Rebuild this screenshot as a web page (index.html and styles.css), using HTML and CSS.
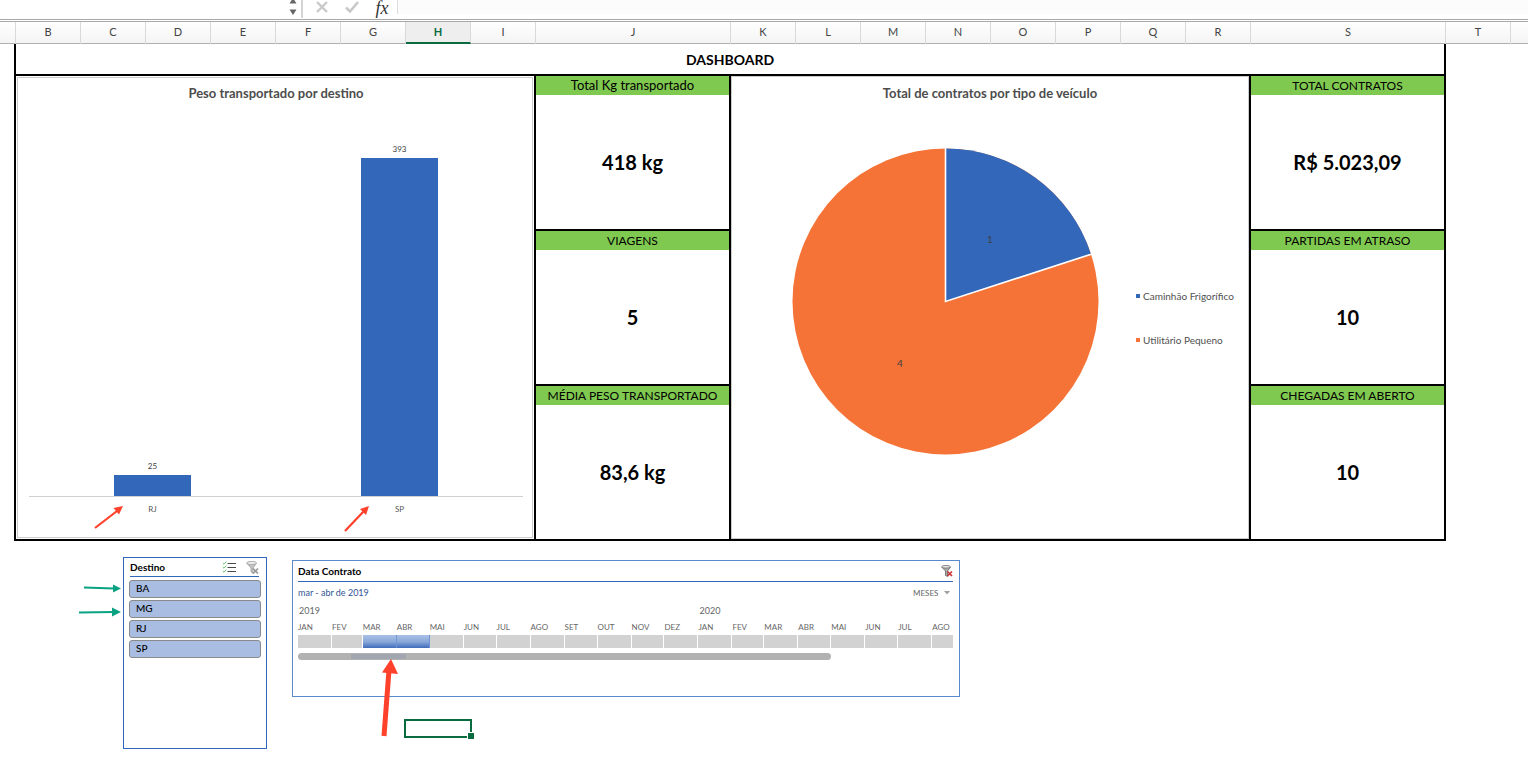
FILE: index.html
```html
<!DOCTYPE html>
<html lang="pt-BR">
<head>
<meta charset="utf-8">
<title>Dashboard</title>
<link rel="stylesheet" href="styles.css">
</head>
<body>
<div class="formula-bar">
  <div class="name-box">
    <input class="name-input" type="text" aria-label="Caixa de nome">
    <svg class="stepper" width="8" height="15" viewBox="0 0 8 15" aria-hidden="true"><path d="M.5 3.500h7L4 -2zM.5 9.500h7L4 15z" fill="#666"/></svg>
  </div>
  <button class="fx-button" type="button" aria-label="Cancelar"><svg width="12" height="12" viewBox="0 0 12 12"><path d="M1 1l10 10M11 1L1 11" stroke="#c9c9c9" stroke-width="2.4" fill="none"/></svg></button>
  <button class="fx-button" type="button" aria-label="Inserir"><svg width="14" height="12" viewBox="0 0 14 12"><path d="M1 6.500l4 4L13 1" stroke="#c9c9c9" stroke-width="2.600" fill="none"/></svg></button>
  <button class="fx-button fx-label" type="button">fx</button>
  <input class="formula-input" type="text" aria-label="Barra de fórmulas">
</div>

<div class="columns">
  <span></span><span>B</span><span>C</span><span>D</span><span>E</span><span>F</span><span>G</span><span class="active">H</span><span>I</span><span>J</span><span>K</span><span>L</span><span>M</span><span>N</span><span>O</span><span>P</span><span>Q</span><span>R</span><span>S</span><span>T</span><span></span>
</div>

<main class="sheet">
  <section class="dashboard">
    <h1 class="dashboard-title">DASHBOARD</h1>
    <div class="panels">
      <section class="chart bar-chart">
        <h2 class="chart-title">Peso transportado por destino</h2>
        <div class="plot">
          <div class="category"><span class="value">25</span><div class="bar" style="height:21px"></div></div>
          <div class="category"><span class="value">393</span><div class="bar" style="height:338px"></div></div>
        </div>
        <div class="axis">
          <span class="tick">RJ
            <svg class="arrow arrow-bar" width="32" height="26" viewBox="0 0 32 26" aria-hidden="true"><path d="M2 24L24 7" stroke="#ff412c" stroke-width="2.200" fill="none"/><path d="M30 2L20.500 4L26 10.500z" fill="#ff412c"/></svg>
          </span>
          <span class="tick">SP
            <svg class="arrow arrow-bar" width="32" height="28" viewBox="0 0 32 28" aria-hidden="true"><path d="M5 27L24 7" stroke="#ff412c" stroke-width="2.200" fill="none"/><path d="M29 2L20 5L26 11z" fill="#ff412c"/></svg>
          </span>
        </div>
      </section>

      <div class="kpis">
        <section class="kpi"><h2 class="kpi-name mixed-case">Total Kg transportado</h2><p class="kpi-value">418 kg</p></section>
        <section class="kpi"><h2 class="kpi-name">VIAGENS</h2><p class="kpi-value">5</p></section>
        <section class="kpi"><h2 class="kpi-name">MÉDIA PESO TRANSPORTADO</h2><p class="kpi-value">83,6 kg</p></section>
      </div>

      <section class="chart pie-chart">
        <h2 class="chart-title">Total de contratos por tipo de veículo</h2>
        <div class="pie-body">
          <svg class="pie" width="307" height="307" viewBox="0 0 307 307" role="img" aria-label="Contratos por tipo de veículo">
            <circle cx="153.500" cy="153.500" r="153" fill="#f57336"/>
            <path d="M153.500 153.500V.5A153 153 0 0 1 299 106.200z" fill="#3267b9"/>
            <path d="M153.500 0V153.500L300 105.900" fill="none" stroke="#fff" stroke-width="1.600"/>
            <text x="198" y="95" text-anchor="middle" class="pie-label">1</text>
            <text x="108" y="219" text-anchor="middle" class="pie-label">4</text>
          </svg>
          <ul class="legend">
            <li class="truck">Caminhão Frigorífico</li>
            <li class="utility">Utilitário Pequeno</li>
          </ul>
        </div>
      </section>

      <div class="kpis">
        <section class="kpi"><h2 class="kpi-name">TOTAL CONTRATOS</h2><p class="kpi-value">R$ 5.023,09</p></section>
        <section class="kpi"><h2 class="kpi-name">PARTIDAS EM ATRASO</h2><p class="kpi-value">10</p></section>
        <section class="kpi"><h2 class="kpi-name">CHEGADAS EM ABERTO</h2><p class="kpi-value">10</p></section>
      </div>
    </div>
  </section>

  <div class="filters">
    <section class="slicer">
      <header class="slicer-head">
        <h2 class="filter-title">Destino</h2>
        <button class="icon-button" type="button" aria-label="Seleção múltipla"><svg width="14" height="13" viewBox="0 0 14 13"><path d="M5.500 2.500H14M5.500 6.500H14M5.500 10.500H14" stroke="#4a4a4a" stroke-width="1.200"/><path d="M.8 2l1.200 1.200L4.300.6M.8 6l1.200 1.200L4.300 4.600M.8 10l1.200 1.200L4.300 8.600" stroke="#6dc06d" fill="none"/></svg></button>
        <button class="icon-button" type="button" aria-label="Limpar filtro"><svg width="13" height="13" viewBox="0 0 13 13"><path d="M.7 2.200L5 7v4l2 1.200V7l3.500-4.800z" fill="#c4c4c4" stroke="#a2a2a2" stroke-width=".8"/><ellipse cx="5.600" cy="2" rx="4.900" ry="1.500" fill="#f1f1f1" stroke="#a0a0a0" stroke-width=".9"/><path d="M7 7.500l5 5M12 7.500l-5 5" stroke="#999" stroke-width="1.700"/></svg></button>
      </header>
      <div class="slicer-items">
        <button class="slicer-item" type="button">BA</button>
        <button class="slicer-item" type="button">MG</button>
        <button class="slicer-item" type="button">RJ</button>
        <button class="slicer-item" type="button">SP</button>
      </div>
      <svg class="arrow arrow-green" width="46" height="36" viewBox="0 0 46 36" aria-hidden="true"><path d="M6 7.500L36 8.500M1 32.500L36 32" stroke="#0aa283" stroke-width="2" fill="none"/><path d="M43 8.500L35 4.500V12.500zM43 32L34 27.500V36.500z" fill="#0aa283"/></svg>
    </section>

    <section class="timeline">
      <header class="timeline-head">
        <h2 class="filter-title">Data Contrato</h2>
        <button class="icon-button" type="button" aria-label="Limpar filtro"><svg width="12" height="12" viewBox="0 0 12 12"><path d="M.7 2L4.500 6v4.500l2 1V6L9.500 2z" fill="#aaa" stroke="#666" stroke-width=".8"/><ellipse cx="5" cy="1.800" rx="4.300" ry="1.300" fill="#eee" stroke="#777" stroke-width=".9"/><path d="M6.500 6.500l4.500 4.500M11 6.500L6.500 11" stroke="#cc3535" stroke-width="1.700"/></svg></button>
      </header>
      <div class="timeline-range">
        <span>mar - abr de 2019</span>
        <label class="period"><select class="period-select" aria-label="Nível de tempo"><option>MESES</option></select><svg width="6" height="4" viewBox="0 0 6 4" aria-hidden="true"><path d="M0 0h6L3 3.500z" fill="#a0a0a0"/></svg></label>
      </div>
      <div class="years"><span>2019</span><span>2020</span></div>
      <div class="months">
        <button type="button">JAN</button><button type="button">FEV</button><button type="button" class="on">MAR</button><button type="button" class="on">ABR</button><button type="button">MAI</button><button type="button">JUN</button><button type="button">JUL</button><button type="button">AGO</button><button type="button">SET</button><button type="button">OUT</button><button type="button">NOV</button><button type="button">DEZ</button><button type="button">JAN</button><button type="button">FEV</button><button type="button">MAR</button><button type="button">ABR</button><button type="button">MAI</button><button type="button">JUN</button><button type="button">JUL</button><button type="button">AGO</button>
      </div>
      <div class="scrollbar"><div class="scroll-mark"></div></div>
      <svg class="arrow arrow-red" width="18" height="80" viewBox="0 0 18 80" aria-hidden="true"><path d="M3 78L8 12" stroke="#ff412c" stroke-width="5" fill="none"/><path d="M10 1L1 14.500L17 16z" fill="#ff412c"/></svg>
    </section>
  </div>
  <div class="cell-cursor"></div>
</main>
</body>
</html>
```

FILE: styles.css
```css
* { box-sizing: border-box; }

body {
  margin: 0;
  background: #fff;
  color: #000;
  font-family: Lato, "Open Sans", sans-serif;
  font-size: 12px;
}

h1, h2, p, ul { margin: 0; padding: 0; }

button, input, select {
  margin: 0;
  padding: 0;
  border: 0;
  background: none;
  color: inherit;
  font: inherit;
}

/* formula bar */
.formula-bar {
  display: flex;
  height: 22px;
  border-bottom: 1px solid #a8a8a8;
  box-shadow: inset 0 -1px #fff, inset 0 -2px #a8a8a8;
}

.name-box {
  display: flex;
  width: 303px;
  height: 18px;
  padding-right: 6px;
  border-right: 2px solid #d4d4d4;
}

.name-input { flex: 1; min-width: 0; }

.stepper { margin-right: -2px; }

.fx-button {
  display: flex;
  width: 30px;
  height: 13px;
  margin-left: 4px;
  align-items: center;
  justify-content: center;
}

.fx-button + .fx-button { margin-left: 0; }

.fx-label {
  height: 16px;
  font: italic 18px/16px "Liberation Serif", serif;
  color: #333;
}

.formula-input {
  flex: 1;
  height: 14px;
  border-left: 1px solid #ddd;
  background: #fcfcfc;
}

/* column headings */
.columns {
  display: grid;
  grid-template-columns: 16px repeat(8, minmax(0, 65fr)) minmax(0, 195fr) repeat(8, minmax(0, 65fr)) minmax(0, 195fr) 65px 17px;
  height: 22px;
  background: linear-gradient(#fff, #f4f4f4);
  border-bottom: 1px solid #b0b0b0;
  color: #444;
  font-size: 11px;
  line-height: 20px;
  text-align: center;
}

.columns span { border-right: 1px solid #d9d9d9; }
.columns span:last-child { border-right: 0; }

.columns .active {
  height: 22px;
  border-bottom: 2px solid #0a6b41;
  background: #eee;
  color: #0a6b41;
  font-weight: 700;
}

.sheet { position: relative; }

/* dashboard */
.dashboard {
  margin: 0 82px 0 14px;
  border: solid #000;
  border-width: 0 2px 2px;
}

.dashboard-title {
  padding: 6px 0 4px;
  border-bottom: 2px solid #000;
  font-size: 14px;
  line-height: 20px;
  text-align: center;
}

.panels {
  display: grid;
  grid-template-columns: minmax(0, 518fr) minmax(0, 193fr) minmax(0, 518fr) minmax(0, 193fr);
  gap: 2px;
  background: #000;
}

.kpis {
  display: grid;
  grid-template-rows: repeat(3, 153px);
  gap: 2px;
}

.kpi {
  display: flex;
  flex-direction: column;
  background: #fff;
  text-align: center;
}

.kpi-name {
  background: #80c951;
  font-size: 12px;
  font-weight: 400;
  line-height: 19px;
  white-space: nowrap;
}

.mixed-case { font-size: 13px; }

.kpi-value {
  margin: auto 0;
  font-size: 20px;
  font-weight: 700;
  line-height: 24px;
}

.chart { background: #fff; }

.chart-title {
  color: #4d4d4d;
  font-size: 13px;
  line-height: 16px;
  text-align: center;
}

.bar-chart {
  padding: 8px 10px 0 12px;
  border: 1px solid #fff;
  outline: 1px solid #ccc;
  outline-offset: -2px;
}

.plot {
  display: flex;
  height: 396px;
  border-bottom: 1px solid #d0d0d0;
}

.category {
  display: flex;
  flex: 1;
  flex-direction: column;
  align-items: center;
  justify-content: flex-end;
}

.value {
  margin-bottom: 4px;
  color: #404040;
  font-size: 8px;
  line-height: 10px;
}

.bar { width: 31%; background: #3267b9; }

.axis { display: flex; }

.tick {
  position: relative;
  flex: 1;
  padding-top: 7px;
  color: #595959;
  font-size: 8px;
  line-height: 10px;
  text-align: center;
}

.arrow { position: absolute; overflow: visible; }

.arrow-bar {
  top: 7px;
  right: calc(50% + 28px);
}

/* pie */
.pie-chart {
  padding-top: 8px;
  border: 1px solid #ccc;
}

.pie-body {
  display: flex;
  padding: 47px 12px 0 60px;
  gap: 37px;
}

.pie { flex: 0 1 auto; min-width: 0; }

.pie-label { fill: #404040; font-size: 10px; }

.legend {
  display: grid;
  align-content: start;
  gap: 30px;
  padding-top: 141px;
  list-style: none;
}

.legend li {
  display: flex;
  align-items: center;
  gap: 3px;
  color: #505050;
  font-size: 10px;
  line-height: 14px;
  white-space: nowrap;
}

.legend li::before {
  width: 4px;
  height: 4px;
  background: #3267b9;
  content: "";
}

.legend .utility::before { background: #f57336; }

/* filters */
.filters {
  display: flex;
  align-items: flex-start;
  gap: 25px;
  padding: 16px 20px 15px 123px;
}

.filter-title { flex: 1; font-size: 10px; line-height: 14px; }

.icon-button { display: flex; }

.slicer {
  position: relative;
  flex: 0 0 144px;
  min-height: 192px;
  padding: 2px 5px;
  border: 1px solid #3267b9;
}

.slicer-head {
  display: flex;
  align-items: center;
  gap: 10px;
  margin: 0 2px 3px 1px;
  padding-bottom: 2px;
  border-bottom: 1px solid #3267b9;
}

.slicer-items { display: grid; gap: 2px; }

.slicer-item {
  height: 18px;
  padding: 0 0 2px 6px;
  border: 1px solid #8a8a8a;
  border-radius: 3px;
  background: #a8bde1;
  font-size: 10px;
  font-weight: 500;
  text-align: left;
}

.arrow-green { top: 22px; right: 142px; }

.timeline {
  position: relative;
  flex: 0 1 668px;
  min-width: 0;
  min-height: 137px;
  margin-top: 3px;
  padding: 3px 6px 0 5px;
  border: 1px solid #5b89c9;
}

.timeline-head {
  display: flex;
  align-items: center;
  padding-bottom: 3px;
  border-bottom: 1px solid #3267b9;
}

.timeline-range {
  display: flex;
  align-items: center;
  justify-content: space-between;
  padding: 4px 3px 0 0;
  color: #2f5496;
  font-size: 9px;
  line-height: 14px;
}

.period {
  display: flex;
  align-items: center;
  gap: 5px;
  color: #666;
  font-size: 8px;
}

.period-select { appearance: none; line-height: 14px; }

.years {
  display: grid;
  grid-template-columns: 365fr 231fr;
  padding: 4px 0 1px 1px;
  color: #666;
  font-size: 9px;
  line-height: 14px;
}

.months {
  display: grid;
  grid-template-columns: 31fr 28fr 31fr 30fr 31fr 30fr 31fr 31fr 30fr 31fr 30fr 31fr 31fr 29fr 31fr 30fr 31fr 30fr 31fr 19fr;
  color: #666;
  font-size: 8px;
  line-height: 16px;
}

.months button {
  min-width: 0;
  text-align: left;
  white-space: nowrap;
}

.months button::after {
  display: block;
  height: 13px;
  border-right: 1px solid #fff;
  background: #d2d2d2;
  content: "";
}

.months .on::after {
  border-right-color: #6f95d6;
  background: linear-gradient(#a9c0e6, #8baada 50%, #3f6dbb);
}

.months button:last-child::after { border-right: 0; }

.scrollbar {
  width: 81.400%;
  height: 7px;
  margin-top: 5px;
  padding-left: 53px;
  border-radius: 4px;
  background: #b2b2b2;
}

.scroll-mark {
  width: 55px;
  height: 6px;
  border-top: 1px solid #b2b2b2;
  background: #a1a6b1;
}

.arrow-red { top: 97px; left: 88px; }

/* selected cell */
.cell-cursor {
  position: absolute;
  top: 675px;
  left: 404px;
  width: 68px;
  height: 19px;
  border: 2px solid #0a6b41;
}

.cell-cursor::after {
  position: absolute;
  right: -4px;
  bottom: -3px;
  width: 6px;
  height: 6px;
  border: solid #fff;
  border-width: 1px 0 0 1px;
  background: #0a6b41;
  content: "";
}
```
